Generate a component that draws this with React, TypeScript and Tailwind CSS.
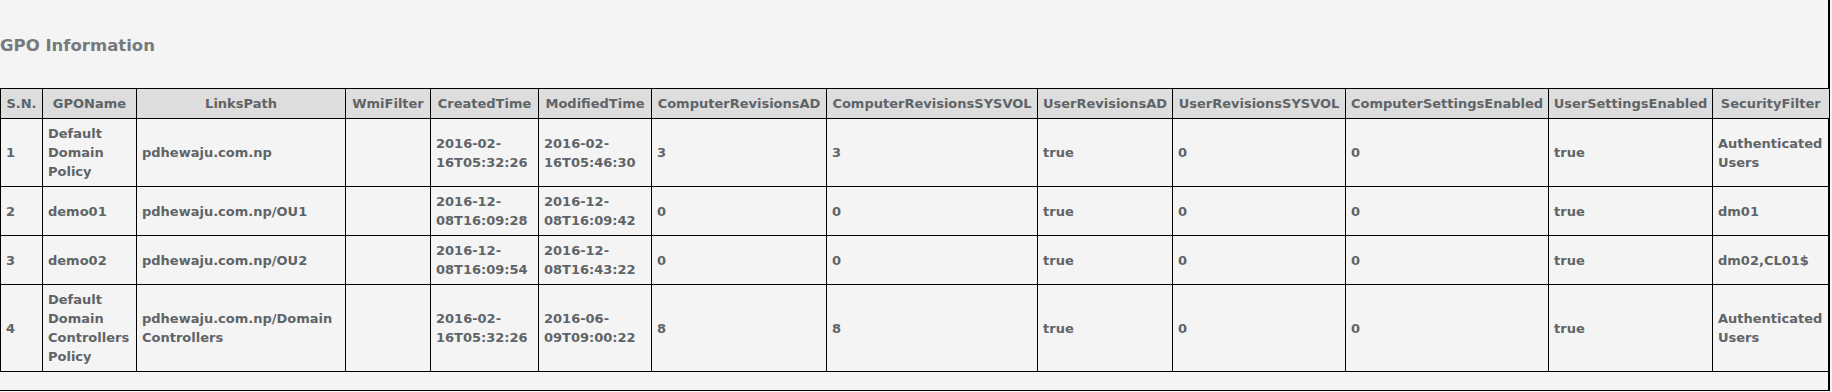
const columns = [
  { key: "sn", label: "S.N.", width: 42 },
  { key: "name", label: "GPOName", width: 94 },
  { key: "links", label: "LinksPath", width: 209 },
  { key: "wmi", label: "WmiFilter", width: 85 },
  { key: "created", label: "CreatedTime", width: 108 },
  { key: "modified", label: "ModifiedTime", width: 113 },
  { key: "crad", label: "ComputerRevisionsAD", width: 175 },
  { key: "crsys", label: "ComputerRevisionsSYSVOL", width: 211 },
  { key: "urad", label: "UserRevisionsAD", width: 135 },
  { key: "ursys", label: "UserRevisionsSYSVOL", width: 173 },
  { key: "cse", label: "ComputerSettingsEnabled", width: 203 },
  { key: "use", label: "UserSettingsEnabled", width: 164 },
  { key: "sec", label: "SecurityFilter", width: 116 },
];

const rows: string[][] = [
  [
    "1",
    "Default Domain Policy",
    "pdhewaju.com.np",
    "",
    "2016-02-16T05:32:26",
    "2016-02-16T05:46:30",
    "3",
    "3",
    "true",
    "0",
    "0",
    "true",
    "Authenticated Users",
  ],
  [
    "2",
    "demo01",
    "pdhewaju.com.np/OU1",
    "",
    "2016-12-08T16:09:28",
    "2016-12-08T16:09:42",
    "0",
    "0",
    "true",
    "0",
    "0",
    "true",
    "dm01",
  ],
  [
    "3",
    "demo02",
    "pdhewaju.com.np/OU2",
    "",
    "2016-12-08T16:09:54",
    "2016-12-08T16:43:22",
    "0",
    "0",
    "true",
    "0",
    "0",
    "true",
    "dm02,CL01$",
  ],
  [
    "4",
    "Default Domain Controllers Policy",
    "pdhewaju.com.np/Domain Controllers",
    "",
    "2016-02-16T05:32:26",
    "2016-06-09T09:00:22",
    "8",
    "8",
    "true",
    "0",
    "0",
    "true",
    "Authenticated Users",
  ],
];

export default function App() {
  return (
    <div className="min-h-screen w-full bg-[#f4f4f4] font-['DejaVu_Sans',sans-serif]">
      <div className="flex h-[391px] w-[1830px] flex-col border-r-2 border-b border-black">
        {/* Title */}
        <h2 className="pt-[35px] text-[16.5px] leading-[22px] font-bold text-[#767a7d]">
          GPO Information
        </h2>

        {/* GPO table */}
        <table className="mt-[31px] w-full table-fixed border-collapse text-[13px] leading-[19px] font-bold text-[#5f6467]">
          <colgroup>
            {columns.map((col) => (
              <col key={col.key} style={{ width: col.width }} />
            ))}
          </colgroup>
          <thead>
            <tr className="bg-[#dddddd]">
              {columns.map((col, i) => (
                <th
                  key={col.key}
                  className={`border border-black px-[4px] py-[5px] text-center font-bold whitespace-nowrap ${
                    i === columns.length - 1 ? "border-r-0" : ""
                  }`}
                >
                  {col.label}
                </th>
              ))}
            </tr>
          </thead>
          <tbody>
            {rows.map((row, r) => (
              <tr key={r}>
                {row.map((cell, i) => (
                  <td
                    key={i}
                    className={`border border-black px-[5px] py-[5px] text-left align-middle ${
                      i === row.length - 1 ? "border-r-0" : ""
                    }`}
                  >
                    {cell}
                  </td>
                ))}
              </tr>
            ))}
          </tbody>
        </table>
      </div>
    </div>
  );
}
